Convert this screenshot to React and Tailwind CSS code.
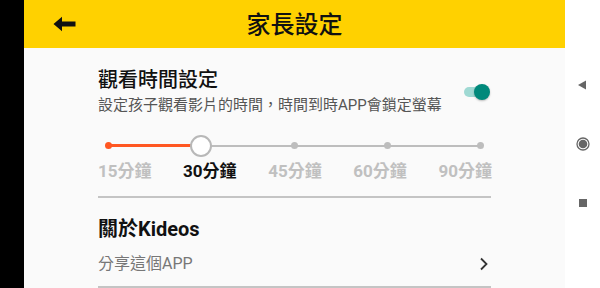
export default function App() {
  const font = { fontFamily: '"Roboto", "Noto Sans CJK TC", sans-serif' };
  const ticks = [108, 201, 294, 387, 480];
  const labels = ["15分鐘", "30分鐘", "45分鐘", "60分鐘", "90分鐘"];
  return (
    <div className="flex w-[600px] h-[288px] overflow-hidden bg-white" style={font}>
      <div className="w-[24px] h-full bg-black shrink-0" />
      <div className="w-[541px] h-full bg-[#fafafa] flex flex-col shrink-0">
        <div className="h-[48px] bg-[#ffd100] flex items-center relative shrink-0">
          <svg className="absolute left-[29px] top-[16px]" width="23" height="16" viewBox="0 0 23 16">
            <path d="M0.5 8 L9 0.8 L9 5.5 L22.5 5.5 L22.5 10.5 L9 10.5 L9 15.2 Z" fill="#111" />
          </svg>
          <div className="w-full text-center text-[24px] font-medium text-[#111] leading-none pt-[1px]">家長設定</div>
        </div>
        <div className="pl-[74px] pr-[74px] flex flex-col">
          <div className="flex items-start justify-between pt-[19px]">
            <div className="flex flex-col">
              <div className="text-[20px] font-medium text-[#111] leading-[26px]">觀看時間設定</div>
              <div className="text-[15px] text-[#555] leading-[20px] mt-[2px] whitespace-nowrap">設定孩子觀看影片的時間，時間到時APP會鎖定螢幕</div>
            </div>
            <div className="relative w-[26px] h-[16px] mt-[17px] mr-[1px] shrink-0">
              <div className="absolute left-[0px] top-[3px] w-[22px] h-[10px] rounded-full bg-[#9fd9d3]" />
              <div className="absolute right-[0px] top-[0px] w-[16px] h-[16px] rounded-full bg-[#00897b] shadow-[0_1px_2px_rgba(0,0,0,0.25)]" />
            </div>
          </div>
          <div className="relative h-[22px] mt-[20px] -ml-[74px] w-[541px]">
            <div className="absolute top-[10px] h-[2px] bg-[#bdbdbd]" style={{ left: 201 - 24, width: 480 - 201 }} />
            <div className="absolute top-[9px] h-[3px] bg-[#ff5722]" style={{ left: 108 - 24, width: 201 - 108 }} />
            {ticks.map((x, i) =>
              i === 1 ? null : (
                <div
                  key={x}
                  className={i === 0 ? "absolute top-[7px] w-[7px] h-[7px] rounded-full bg-[#ff5722]" : "absolute top-[7px] w-[7px] h-[7px] rounded-full bg-[#bdbdbd]"}
                  style={{ left: x - 24 - 3.5 }}
                />
              )
            )}
            <div className="absolute top-[0px] w-[22px] h-[22px] rounded-full bg-white border-2 border-[#b8b8b8]" style={{ left: 201 - 24 - 11 }} />
          </div>
          <div className="flex justify-between mt-[3px] w-[394px]">
            {labels.map((l, i) => (
              <div key={l} className={i === 1 ? "text-[17px] font-bold text-[#111] leading-[22px]" : "text-[17px] font-bold text-[#c0c0c0] leading-[22px]"}>
                {l}
              </div>
            ))}
          </div>
          <div className="h-[2px] bg-[#c4c4c4] mt-[14px] w-[393px]" />
          <div className="text-[20px] font-bold text-[#111] leading-[26px] mt-[18px]">關於Kideos</div>
          <div className="flex items-center justify-between mt-[12px] w-[393px]">
            <div className="text-[16px] text-[#777] leading-[20px]">分享這個APP</div>
            <svg width="10" height="14" viewBox="0 0 10 14" className="mr-[2px]">
              <path d="M2 1.5 L7.5 7 L2 12.5" stroke="#333" strokeWidth="1.8" fill="none" />
            </svg>
          </div>
          <div className="h-[2px] bg-[#c4c4c4] mt-[12px] w-[393px]" />
        </div>
      </div>
      <div className="flex-1 h-full bg-white flex flex-col items-center pt-[80px]">
        <svg width="10" height="10" viewBox="0 0 10 10" className="ml-[-2px]">
          <path d="M1 5 L9 0.5 L9 9.5 Z" fill="#666" />
        </svg>
        <svg width="14" height="14" viewBox="0 0 14 14" className="mt-[47px]">
          <circle cx="7" cy="7" r="6" fill="none" stroke="#666" strokeWidth="1.3" />
          <circle cx="7" cy="7" r="4.3" fill="#666" />
        </svg>
        <div className="w-[8px] h-[8px] bg-[#666] mt-[48px]" />
      </div>
    </div>
  );
}
